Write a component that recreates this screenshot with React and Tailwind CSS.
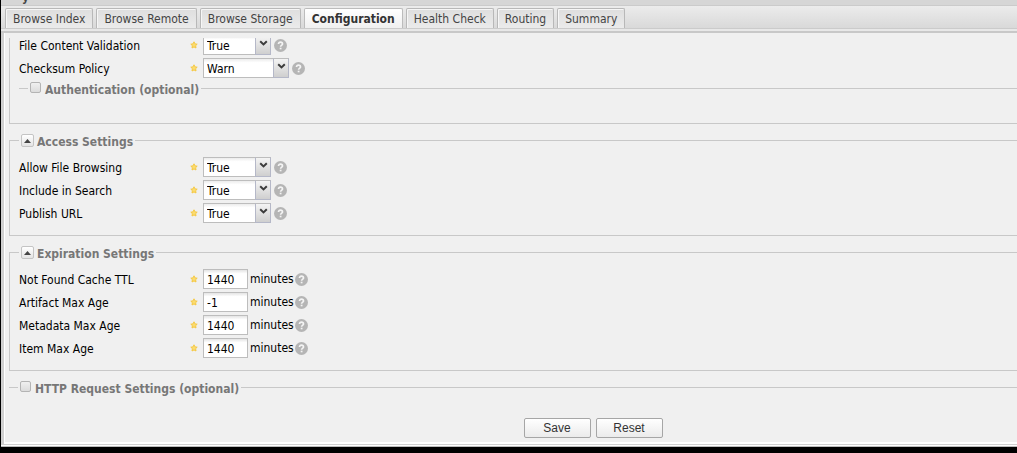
import { useState } from "react"
import clsx from "clsx"

const TABS = [
  "Browse Index",
  "Browse Remote",
  "Browse Storage",
  "Configuration",
  "Health Check",
  "Routing",
  "Summary",
]

const ACCESS_FIELDS = ["Allow File Browsing", "Include in Search", "Publish URL"]

const EXPIRATION_FIELDS = [
  { label: "Not Found Cache TTL", value: "1440" },
  { label: "Artifact Max Age", value: "-1" },
  { label: "Metadata Max Age", value: "1440" },
  { label: "Item Max Age", value: "1440" },
]

function toId(label) {
  return label.toLowerCase().replace(/\s+/g, "-")
}

function RequiredStar() {
  return (
    <svg className="h-2 w-2 shrink-0" viewBox="0 0 8 8" aria-hidden="true">
      <path
        d="M4 .8 5 2.9 7.2 3.2 5.6 4.7 6 7 4 5.9 2 7 2.4 4.7 .8 3.2 3 2.9Z"
        fill="#fbdc70"
        stroke="#f5c842"
        strokeWidth="1"
        strokeLinejoin="round"
      />
    </svg>
  )
}

function HelpIcon() {
  return (
    <svg className="h-[13px] w-[13px] shrink-0" viewBox="0 0 13 13" aria-hidden="true">
      <circle cx="6.5" cy="6.5" r="6.5" fill="#b5b5b5" />
      <path
        d="M4.5 5.1C4.5 3.8 5.3 3.2 6.5 3.2S8.5 3.9 8.5 4.9C8.5 6.1 6.6 6.1 6.6 7.8"
        fill="none"
        stroke="#f4f4f4"
        strokeWidth="1.7"
      />
      <rect x="5.7" y="8.7" width="1.8" height="1.6" fill="#f4f4f4" />
    </svg>
  )
}

function Field({ label, children }) {
  return (
    <div className="flex h-5 items-center">
      <label htmlFor={toId(label)} className="w-[171px] shrink-0 pt-px">
        {label}
      </label>
      <RequiredStar />
      <div className="ml-[5px] flex items-center">{children}</div>
    </div>
  )
}

function SelectField({ label, options, wide }) {
  return (
    <Field label={label}>
      <div className={clsx("relative mr-[3px] h-5", wide ? "w-[86px]" : "w-[68px]")}>
        <select
          id={toId(label)}
          className="h-5 w-full appearance-none border border-[#bdbdbd] bg-white bg-linear-to-b from-[#ececec] from-0% to-white to-20% pt-[2px] pl-[3px]"
        >
          {options.map((o) => (
            <option key={o}>{o}</option>
          ))}
        </select>
        <span className="pointer-events-none absolute inset-y-0 right-0 flex w-4 justify-center border border-[#b5b8c8] border-t-[#bdbdbd] bg-linear-to-b from-[#f4f4f4] to-[#cfcfcf] pt-1">
          <svg className="h-[7px] w-[9px]" viewBox="0 0 9 7" aria-hidden="true">
            <path d="M1.2 1.2 4.5 4.4 7.8 1.2" fill="none" stroke="#3c3c3c" strokeWidth="2" />
          </svg>
        </span>
      </div>
      <HelpIcon />
    </Field>
  )
}

function MinutesField({ label, value }) {
  return (
    <Field label={label}>
      <input
        id={toId(label)}
        type="text"
        defaultValue={value}
        className="mr-[2px] h-5 w-[45px] border border-[#bdbdbd] bg-linear-to-b from-[#e4e4e4] from-0% to-white to-20% pt-[2px] pl-[3px]"
      />
      <span className="w-[45px]">minutes</span>
      <HelpIcon />
    </Field>
  )
}

function CollapsibleSection({ title, children }) {
  const [open, setOpen] = useState(true)
  return (
    <fieldset className="mt-2 border border-r-0 border-[#c8c8c8] pl-[9px] pb-3">
      <legend className="flex h-[17px] items-center px-[2px] font-bold text-[#777]">
        <button
          type="button"
          aria-label={`Toggle ${title}`}
          onClick={() => setOpen(!open)}
          className="mr-[3px] flex h-[13px] w-[13px] items-center justify-center rounded-xs border border-[#c4c4c4] bg-linear-to-b from-white to-[#e4e4e4]"
        >
          <svg className="h-1 w-[7px]" viewBox="0 0 7 4" aria-hidden="true">
            <path d={open ? "M0 4 3.5 0 7 4Z" : "M0 0 3.5 4 7 0Z"} fill="#444" />
          </svg>
        </button>
        <span className="pt-[3px]">{title}</span>
      </legend>
      {open && <div className="flex flex-col gap-[3px] pt-2">{children}</div>}
    </fieldset>
  )
}

function OptionalSection({ title, className }) {
  return (
    <fieldset className={clsx("border-t border-[#c8c8c8] pl-[9px]", className)}>
      <legend className="h-[17px] px-[2px] font-bold text-[#777]">
        <label className="flex h-[17px] items-center">
          <input
            type="checkbox"
            className="mr-1 mb-[3px] h-[11px] w-[11px] appearance-none rounded-xs border border-[#b4b4b4] bg-linear-to-b from-[#f0f0f0] to-[#dcdcdc] checked:bg-[#777]"
          />
          <span className="pt-[3px]">{title}</span>
        </label>
      </legend>
    </fieldset>
  )
}

function TabBar({ active, onSelect }) {
  return (
    <nav className="flex h-6 items-end gap-[3px] border-y border-[#cbcbcb] bg-linear-to-b from-[#ececec] to-[#d9d9d9] pl-1">
      {TABS.map((tab) => (
        <button
          key={tab}
          type="button"
          onClick={() => onSelect(tab)}
          className={clsx(
            "h-5 rounded-t-xs border border-b-0 px-[7px]",
            tab === active
              ? "border-[#bcbcbc] bg-linear-to-b from-white to-[#f0f0f0] font-bold text-[#333]"
              : "border-[#b8b8b8] bg-linear-to-b from-[#dedede] to-[#ebebeb] text-[#444] shadow-[inset_1px_1px_0_#f6f6f6]"
          )}
        >
          {tab}
        </button>
      ))}
    </nav>
  )
}

function ActionButton({ children, ...props }) {
  return (
    <button
      {...props}
      className="h-5 w-[67px] rounded-xs border border-[#a6a6a6] bg-linear-to-b from-white to-[#ebebeb] font-['Liberation_Sans',sans-serif] text-[#333]"
    >
      {children}
    </button>
  )
}

export default function App() {
  const [active, setActive] = useState("Configuration")

  return (
    <div className="min-h-screen overflow-hidden bg-black pl-px font-['DejaVu_Sans_Condensed','DejaVu_Sans',sans-serif] text-[12px] leading-4 text-black [font-stretch:condensed]">
      <div className="border-b border-[#bbb] bg-[#f0f0f0]">
        <header className="flex h-[5px] items-end overflow-hidden bg-[#d6d6d6] pl-[21px] font-bold text-[#444]">
          <span className="h-4">y</span>
        </header>
        <TabBar active={active} onSelect={setActive} />
        <div className="h-1 border-b-2 border-[#c8c8c8] bg-[#e8e8e8]" />

        <div className="border-b border-l-3 border-[#d0d0d0]">
          <form
            className="border-b-2 border-l border-white pt-[5px] pl-1"
            onSubmit={(e) => e.preventDefault()}
          >
            {/* Scrolled area, its first row is partly hidden under the tabs */}
            <div className="overflow-hidden">
              <fieldset className="-mt-[3px] border-b border-l border-[#c8c8c8] pb-[26px] pl-[9px]">
                <div className="flex flex-col gap-[3px]">
                  <SelectField label="File Content Validation" options={["True", "False"]} />
                  <SelectField label="Checksum Policy" options={["Warn", "Ignore", "Strict"]} wide />
                </div>
                <OptionalSection title="Authentication (optional)" className="mt-[2px]" />
              </fieldset>

              <CollapsibleSection title="Access Settings">
                {ACCESS_FIELDS.map((label) => (
                  <SelectField key={label} label={label} options={["True", "False"]} />
                ))}
              </CollapsibleSection>

              <CollapsibleSection title="Expiration Settings">
                {EXPIRATION_FIELDS.map((f) => (
                  <MinutesField key={f.label} {...f} />
                ))}
              </CollapsibleSection>

              <OptionalSection title="HTTP Request Settings (optional)" className="mt-2" />
            </div>

            <div className="flex justify-center gap-[5px] pt-[22px] pb-1 pl-[160px]">
              <ActionButton type="submit">Save</ActionButton>
              <ActionButton type="reset">Reset</ActionButton>
            </div>
          </form>
        </div>
        <div className="h-px bg-white" />
      </div>
    </div>
  )
}
